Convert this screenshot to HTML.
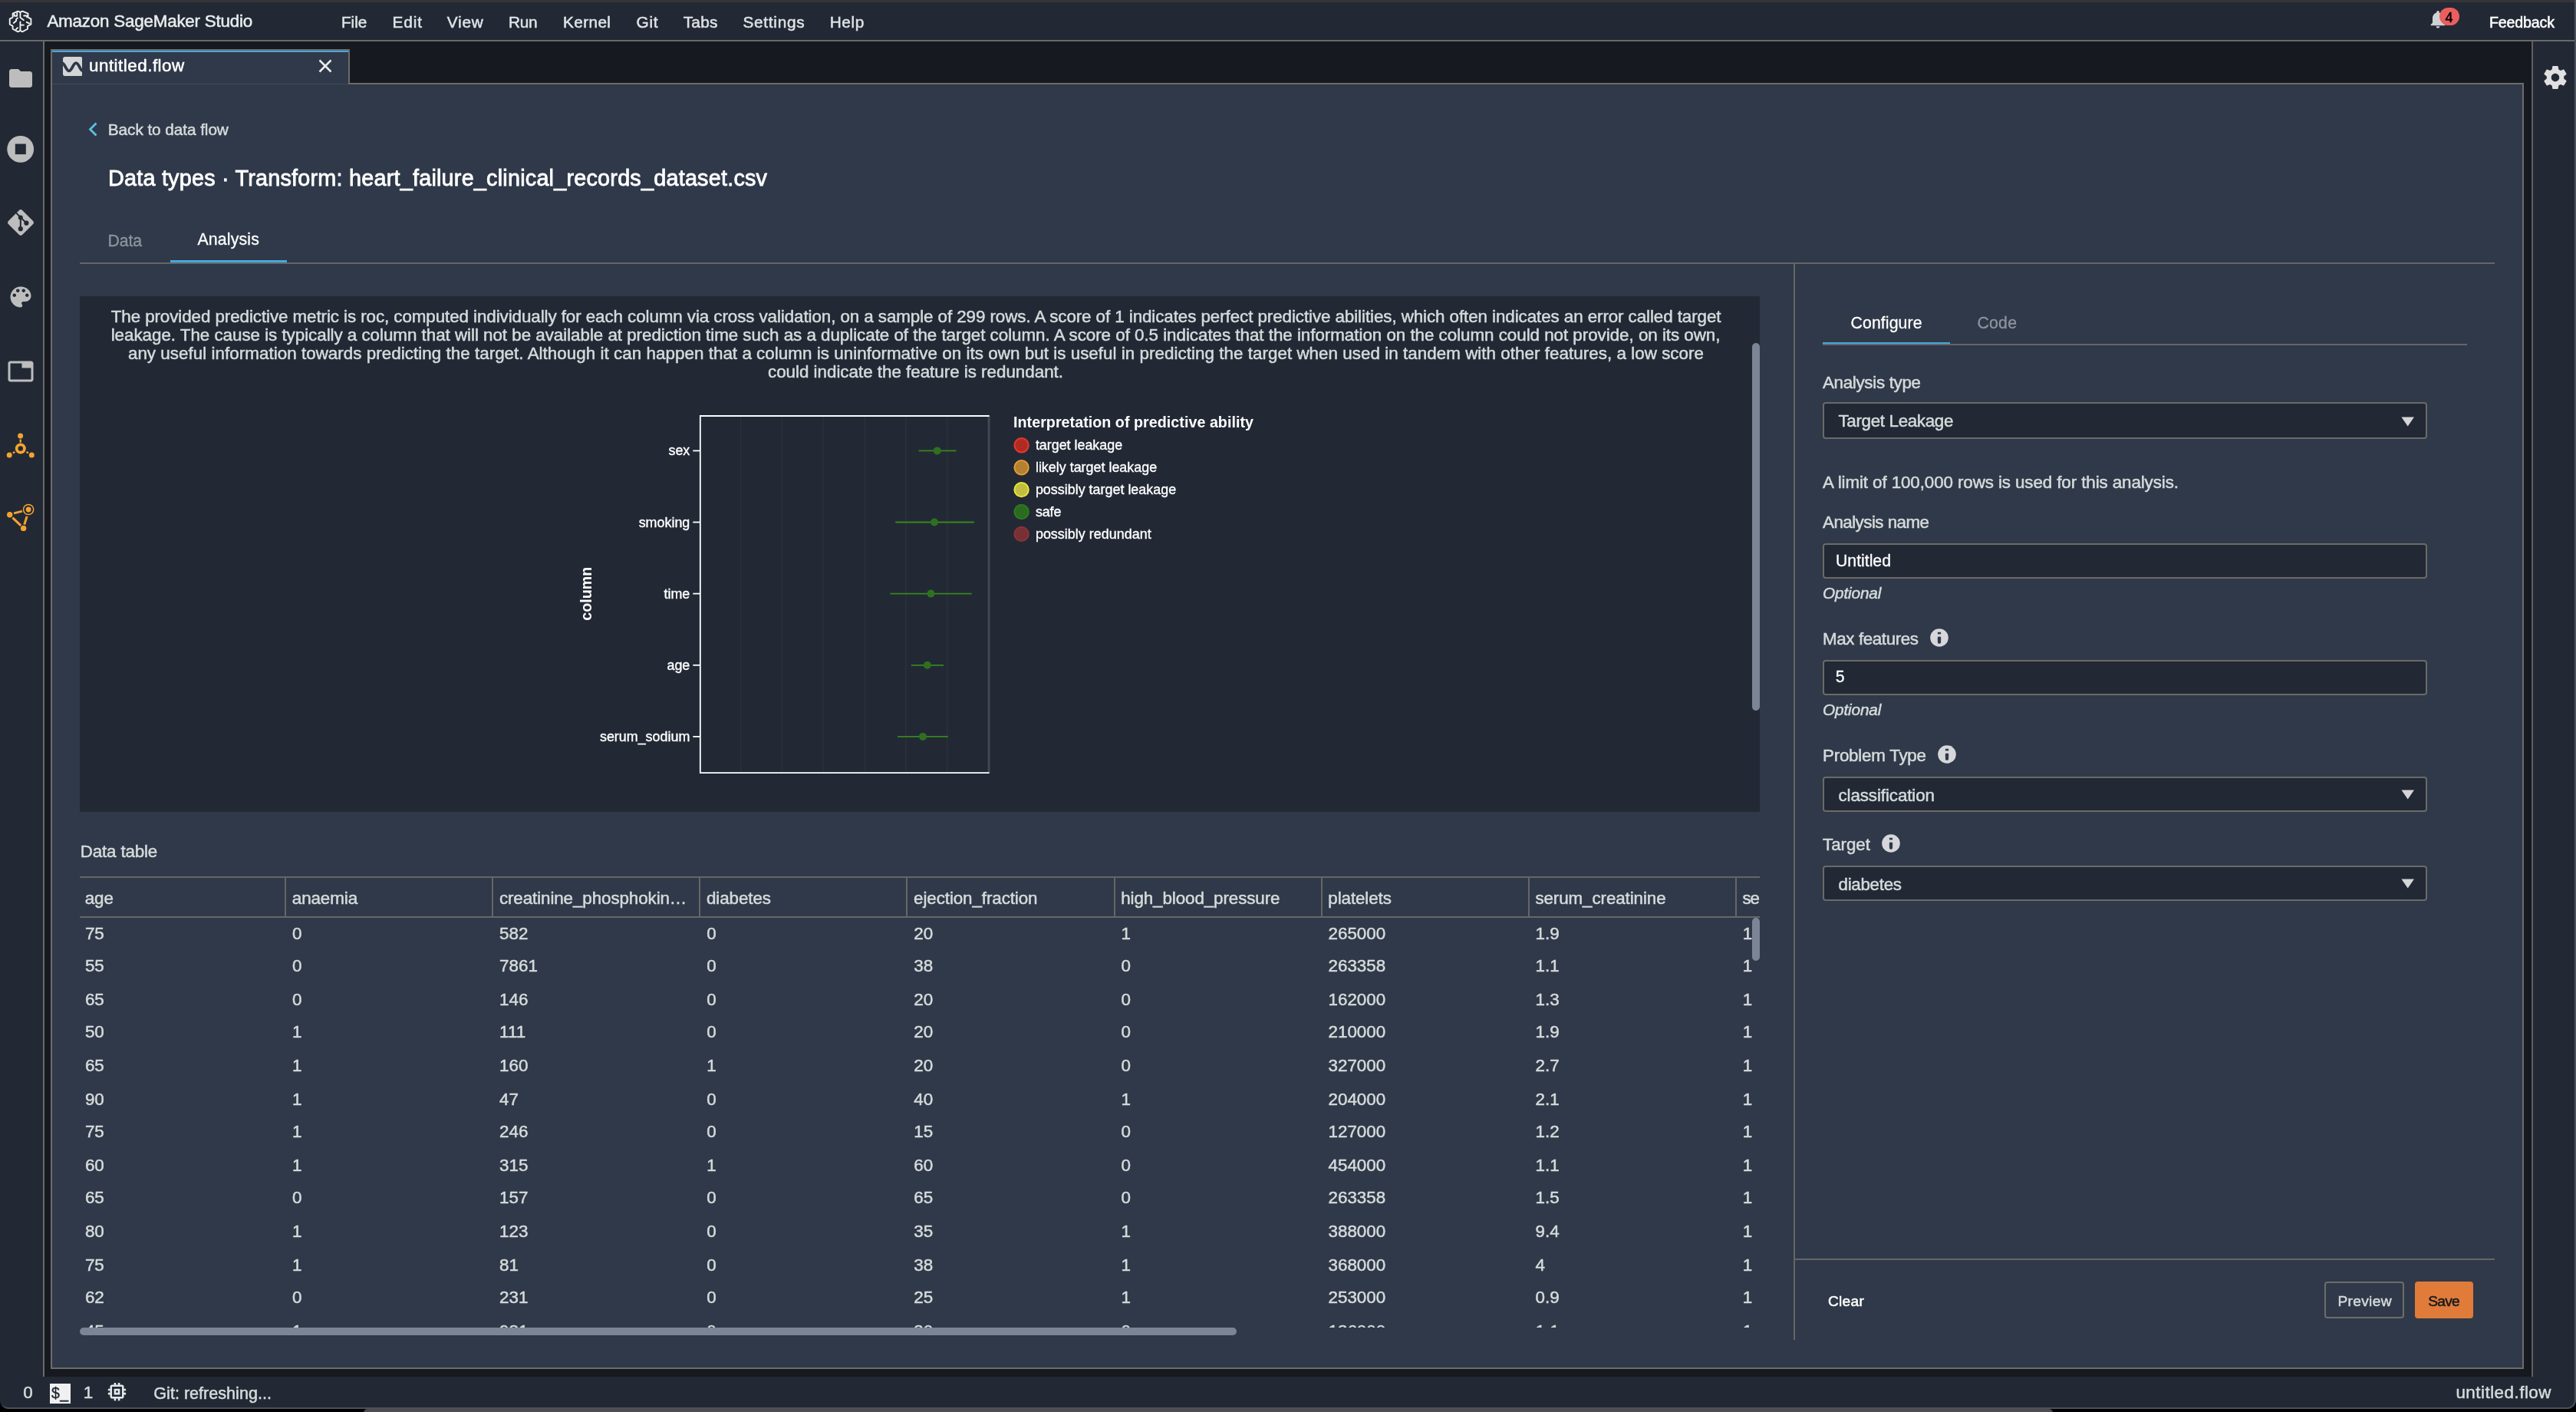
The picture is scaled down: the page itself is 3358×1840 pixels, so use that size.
<!DOCTYPE html><html lang="en"><head><meta charset="utf-8"><title>Amazon SageMaker Studio</title><style>
*{box-sizing:border-box;margin:0;padding:0}
html,body{width:3358px;height:1840px;overflow:hidden;background:#000}
body{position:relative;font-family:"Liberation Sans", sans-serif;-webkit-font-smoothing:antialiased}
.abs,.t,svg.i{position:absolute}
.t{white-space:pre;line-height:1;display:block;-webkit-text-stroke:0.5px currentColor}
#win{position:absolute;left:0;top:0;width:3358px;height:1836px;box-shadow:inset -2px -2px 0 #4a515c;background:#16191f;border-radius:0 0 12px 12px;overflow:hidden;will-change:transform}
#strip{left:0;top:0;width:3358px;height:3.500px;background:#353537}
#topbar{left:0;top:3px;width:3358px;height:51px;background:#222935;border-bottom:2px solid #6a6a68}
#lside{left:0;top:54px;width:58px;height:1740px;background:#222935;border-right:2px solid #6a6a68}
#rside{left:3300px;top:54px;width:58px;height:1740px;background:#222935;border-left:2px solid #606060}
#status{left:0;top:1794px;width:3358px;height:42px;background:#222935}
#tab{left:66px;top:63.500px;width:390px;height:46px;background:#303949;border:2px solid #6b6b69;border-bottom:none}
#tab:before{content:'';position:absolute;left:0;top:0;width:100%;height:2.500px;background:#44a8dc}
#content{left:66px;top:108px;width:3224px;height:1676px;background:#303949;border:2px solid #6c6c6a}
#tab{z-index:2}
#tabcover{left:68px;top:108px;width:386px;height:2px;background:linear-gradient(#303949 50%,#454c56 50%);z-index:3}
.hl{background:#666;height:2px}
.vl{background:#666;width:2px}
#panel{left:104px;top:386px;width:2190px;height:672px;background:#222935}
.sb{background:#7c8596;border-radius:5px}
.field{left:2376px;width:788px;height:46px;background:#222935;border:2px solid #6b6a68;border-radius:4px}
.btn{border-radius:4px;height:48px;top:1670px}
#thead .c, .row .c{position:absolute;white-space:pre;line-height:1;font-size:22.4px;color:#d5dbdb;-webkit-text-stroke:0.5px currentColor}
.sep{position:absolute;top:1144px;width:2px;height:50px;background:#666}
#tclip{left:104px;top:1142px;width:2190px;height:588px;overflow:hidden}
</style></head><body><div id="win"><div id="strip" class="abs"></div><header><div id="topbar" class="abs"></div><svg class="i" id="logo" style="left:5px;top:8px" width="45" height="42" viewBox="0 0 1513 1412" fill="none" stroke="#f4f4f4" stroke-width="62" stroke-linecap="round" stroke-linejoin="round">
<path d="M620 225 720 265 820 225 1060 320V490L1190 560V800L1040 880V1000L820 1120 720 1075 620 1120 390 1000V870L260 800V560L390 490V320z"/>
<path d="M720 265V500L870 610M720 690V1075M720 830H870M455 335V430H580V290M600 520 540 575V650L430 740M600 950 540 1010M880 420H1010V480M1000 700 1120 760"/></svg><span class="t" style="left:61.4px;top:17.1px;font-size:22.4px;color:#eaeded;letter-spacing:-0.213px;">Amazon SageMaker Studio</span><nav><span class="t" style="left:444.9px;top:18.9px;font-size:20.8px;color:#e0e3e6;letter-spacing:-0.005px;">File</span><span class="t" style="left:511.5px;top:18.9px;font-size:20.8px;color:#e0e3e6;letter-spacing:0.885px;">Edit</span><span class="t" style="left:582.8px;top:18.9px;font-size:20.8px;color:#e0e3e6;letter-spacing:0.766px;">View</span><span class="t" style="left:662.9px;top:18.9px;font-size:20.8px;color:#e0e3e6;letter-spacing:-0.228px;">Run</span><span class="t" style="left:734.1px;top:18.9px;font-size:20.8px;color:#e0e3e6;letter-spacing:0.355px;">Kernel</span><span class="t" style="left:829.6px;top:18.9px;font-size:20.8px;color:#e0e3e6;letter-spacing:0.711px;">Git</span><span class="t" style="left:890.7px;top:18.9px;font-size:20.8px;color:#e0e3e6;letter-spacing:0.254px;">Tabs</span><span class="t" style="left:968.5px;top:18.9px;font-size:20.8px;color:#e0e3e6;letter-spacing:0.706px;">Settings</span><span class="t" style="left:1081.7px;top:18.9px;font-size:20.8px;color:#e0e3e6;letter-spacing:0.640px;">Help</span></nav><svg class="i" style="left:3163.700px;top:10.800px" width="28" height="28" viewBox="0 0 24 24"><path fill="#cfd2d4" d="M12 22c1.100 0 2-.9 2-2h-4c0 1.100.89 2 2 2zm6-6v-5c0-3.070-1.640-5.640-4.500-6.320V4c0-.83-.67-1.500-1.500-1.500s-1.500.67-1.500 1.500v.68C7.630 5.360 6 7.920 6 11v5l-2 2v1h16v-1l-2-2z"/></svg><div class="abs" style="left:3180px;top:10px;width:26px;height:23px;border-radius:12px;background:#ec5e5e"></div><span class="t" style="left:3187.5px;top:14.3px;font-size:18px;color:#000000;">4</span><span class="t" style="left:3245.0px;top:20.0px;font-size:19.6px;color:#ffffff;letter-spacing:-0.152px;">Feedback</span></header><aside><div id="lside" class="abs"></div><svg class="i" style="left:9px;top:83.500px" width="36" height="36" viewBox="0 0 24 24"><path fill="#bdbdbd" d="M10 4H4c-1.100 0-1.990.9-1.990 2L2 18c0 1.100.9 2 2 2h16c1.100 0 2-.9 2-2V8c0-1.100-.9-2-2-2h-8l-2-2z"/></svg><svg class="i" style="left:8px;top:176px" width="38" height="38" viewBox="0 0 38 38"><circle cx="18.700" cy="18.300" r="17.400" fill="#bdbdbd"/><rect x="11.800" y="11.500" width="14" height="13.600" fill="#222935"/></svg><svg class="i" style="left:7px;top:270.400px" width="40" height="40" viewBox="0 0 40 40"><rect x="7.200" y="7.200" width="25.600" height="25.600" rx="3.200" transform="rotate(45 20 20)" fill="#bdbdbd"/>
<g stroke="#222935" stroke-width="2" fill="#222935"><path d="M14 7.400 19.800 13.200V28.200" fill="none"/><path d="M19.800 13.200 27.400 20.600" fill="none"/><circle cx="19.800" cy="13.400" r="2" /><circle cx="27.400" cy="20.700" r="2.100"/><circle cx="19.800" cy="28.200" r="2.100"/></g></svg><svg class="i" style="left:8.600px;top:369.400px" width="36" height="36" viewBox="0 0 24 24"><path fill="#bdbdbd" d="M12 3c-4.970 0-9 4.030-9 9s4.030 9 9 9c.83 0 1.500-.67 1.500-1.500 0-.39-.15-.74-.39-1.010-.23-.26-.38-.61-.38-.99 0-.83.67-1.500 1.500-1.500H16c2.760 0 5-2.240 5-5 0-4.420-4.030-8-9-8zm-5.500 9c-.83 0-1.500-.67-1.500-1.500S5.670 9 6.500 9 8 9.670 8 10.500 7.330 12 6.500 12zm3-4C8.670 8 8 7.330 8 6.500S8.670 5 9.500 5s1.500.67 1.500 1.500S10.330 8 9.500 8zm5 0c-.83 0-1.500-.67-1.500-1.500S13.670 5 14.500 5s1.500.67 1.500 1.500S15.330 8 14.500 8zm3 4c-.83 0-1.500-.67-1.500-1.500S16.670 9 17.500 9s1.500.67 1.500 1.500-.67 1.500-1.500 1.500z"/></svg><svg class="i" style="left:8.700px;top:465.500px" width="36" height="36" viewBox="0 0 24 24"><path fill="#bdbdbd" d="M21 3H3c-1.100 0-2 .9-2 2v14c0 1.100.9 2 2 2h18c1.100 0 2-.9 2-2V5c0-1.100-.9-2-2-2zm0 16H3V5h10v4h8v10z"/></svg><svg class="i" style="left:6px;top:560px" width="42" height="42" viewBox="0 0 42 42" fill="#f5a32f" stroke="#f5a32f"><circle cx="20.600" cy="7.900" r="3.500" stroke="none"/><circle cx="6.200" cy="33" r="3.500" stroke="none"/><circle cx="35.300" cy="33" r="3.500" stroke="none"/>
<circle cx="20.800" cy="24.500" r="5.150" fill="none" stroke-width="3.800"/><path d="M20.700 12.400v4.400M10.800 30.300l2.600-1.300M28.400 29l2.600 1.300" stroke-width="2.300" fill="none"/></svg><svg class="i" style="left:6px;top:654px" width="42" height="42" viewBox="0 0 42 42" fill="#f5a32f" stroke="#f5a32f"><circle cx="6.700" cy="16.800" r="3.700" stroke="none"/><circle cx="24.600" cy="34.400" r="3.700" stroke="none"/>
<circle cx="31.100" cy="10" r="3.400" stroke="none"/><circle cx="31.100" cy="10" r="6.600" fill="none" stroke-width="1.500"/><path d="M12.100 14.900 22.900 12.100M10.400 20.600 21.200 30.800M25.700 29.600 29.100 18.900" stroke-width="3" fill="none"/></svg></aside><aside><div id="rside" class="abs"></div><svg class="i" style="left:3312.600px;top:83.400px" width="36" height="36" viewBox="0 0 24 24"><path fill="#e0e0e0" d="M19.430 12.980c.04-.32.07-.64.07-.98s-.03-.66-.07-.98l2.110-1.650c.19-.15.24-.42.120-.64l-2-3.460c-.12-.22-.39-.3-.61-.22l-2.490 1c-.52-.4-1.080-.73-1.690-.98l-.38-2.650C14.460 2.180 14.250 2 14 2h-4c-.25 0-.46.18-.49.42l-.38 2.650c-.61.250-1.170.59-1.690.98l-2.490-1c-.23-.09-.49 0-.61.22l-2 3.460c-.13.22-.07.49.120.64l2.110 1.650c-.04.32-.07.650-.07.980s.03.660.07.980l-2.110 1.650c-.19.150-.24.420-.12.640l2 3.460c.12.220.39.300.61.220l2.490-1c.52.400 1.080.730 1.690.980l.38 2.650c.03.240.24.420.49.420h4c.25 0 .46-.18.490-.42l.38-2.650c.61-.25 1.170-.59 1.690-.98l2.490 1c.23.090.49 0 .61-.22l2-3.460c.12-.22.070-.49-.12-.64l-2.110-1.650zM12 15.500c-1.930 0-3.500-1.570-3.500-3.500s1.570-3.500 3.500-3.500 3.500 1.570 3.500 3.500-1.570 3.500-3.500 3.500z"/></svg></aside><div id="tab" class="abs"></div><div id="tabcover" class="abs"></div><svg class="i" style="left:81.700px;top:73.800px;z-index:4" width="25.500" height="25.200" viewBox="0 0 25.500 25.200"><rect width="25.500" height="25.200" rx="3" fill="#d4d5d7"/><path d="M-1.200 8.200C2.600 8.200 4.200 18.500 7.950 18.500S13.300 8.200 17.100 8.200 22.500 18.500 26.250 18.500" fill="none" stroke="#2e3848" stroke-width="3.700"/></svg><svg class="i" style="left:415.300px;top:77.200px;z-index:4" width="18" height="18" viewBox="0 0 18 18"><path d="M1.500 1.500l15 15M16.500 1.500l-15 15" stroke="#ececec" stroke-width="2.500" fill="none"/></svg><span class="t" style="left:116.0px;top:74.7px;font-size:22.4px;color:#ffffff;letter-spacing:0.496px;z-index:4;">untitled.flow</span><main><div id="content" class="abs"></div><svg class="i" style="left:115px;top:159px" width="13" height="19" viewBox="0 0 13 19"><path d="M10.500 1.500 2.500 9.500l8 8" fill="none" stroke="#5bc2de" stroke-width="2.800"/></svg><span class="t" style="left:140.8px;top:158.6px;font-size:20.8px;color:#d5dbdb;letter-spacing:-0.080px;">Back to data flow</span><h1 class="t" style="left:141.0px;top:218.0px;font-size:28.8px;color:#ffffff;letter-spacing:0.214px;-webkit-text-stroke-width:0.8px;font-weight:400;">Data types · Transform: heart_failure_clinical_records_dataset.csv</h1><span class="t" style="left:140.5px;top:303.6px;font-size:21.3px;color:#8d949e;letter-spacing:-0.167px;-webkit-text-stroke-width:0.3px;">Data</span><span class="t" style="left:257.5px;top:302.2px;font-size:21.3px;color:#ffffff;letter-spacing:0.141px;-webkit-text-stroke-width:0.3px;">Analysis</span><div class="abs hl" style="left:104px;top:342px;width:3148px"></div><div class="abs" style="left:222px;top:339px;width:152px;height:3px;background:#44a8dc"></div><section><div id="panel" class="abs"></div><p class="t" style="left:144.7px;top:402.2px;font-size:22.4px;color:#d5dbdb;letter-spacing:-0.088px;">The provided predictive metric is roc, computed individually for each column via cross validation, on a sample of 299 rows. A score of 1 indicates perfect predictive abilities, which often indicates an error called target</p><p class="t" style="left:144.7px;top:426.1px;font-size:22.4px;color:#d5dbdb;letter-spacing:-0.041px;">leakage. The cause is typically a column that will not be available at prediction time such as a duplicate of the target column. A score of 0.5 indicates that the information on the column could not provide, on its own,</p><p class="t" style="left:166.9px;top:450.1px;font-size:22.4px;color:#d5dbdb;letter-spacing:0.032px;">any useful information towards predicting the target. Although it can happen that a column is uninformative on its own but is useful in predicting the target when used in tandem with other features, a low score</p><p class="t" style="left:1001.0px;top:474.1px;font-size:22.4px;color:#d5dbdb;letter-spacing:-0.023px;">could indicate the feature is redundant.</p><div class="abs sb" style="left:2284px;top:447px;width:10px;height:479px"></div><svg class="i" style="left:104px;top:386px" width="2180" height="672" viewBox="104 386 2180 672" font-family='"Liberation Sans", sans-serif'><rect x="912.8" y="542.0" width="376.79999999999995" height="465.1" fill="none" stroke="#41464f" stroke-width="1.600"/><line x1="965.6" x2="965.6" y1="542.0" y2="1007.1" stroke="#2a303a" stroke-width="1.800"/><line x1="1019.5" x2="1019.5" y1="542.0" y2="1007.1" stroke="#2a303a" stroke-width="1.800"/><line x1="1073.3" x2="1073.3" y1="542.0" y2="1007.1" stroke="#2a303a" stroke-width="1.800"/><line x1="1127.1" x2="1127.1" y1="542.0" y2="1007.1" stroke="#2a303a" stroke-width="1.800"/><line x1="1180.9" x2="1180.9" y1="542.0" y2="1007.1" stroke="#2a303a" stroke-width="1.800"/><line x1="1234.8" x2="1234.8" y1="542.0" y2="1007.1" stroke="#2a303a" stroke-width="1.800"/><line x1="1289.0" x2="1289.0" y1="542.0" y2="1007.1" stroke="#41464f" stroke-width="3"/><path d="M1289.6 542.0H912.8V1007.1H1289.6" fill="none" stroke="#ffffff" stroke-width="1.800"/><line x1="903.3" x2="912.8" y1="587.4" y2="587.4" stroke="#ffffff" stroke-width="1.800"/><text x="899.3" y="593.4" text-anchor="end" font-size="17.900" fill="#ffffff" stroke="#ffffff" stroke-width="0.350">sex</text><line x1="1197.6" x2="1246.5" y1="587.4" y2="587.4" stroke="#37871d" stroke-width="1.800"/><circle cx="1221.7" cy="587.4" r="5" fill="#2f7020"/><line x1="903.3" x2="912.8" y1="680.5" y2="680.5" stroke="#ffffff" stroke-width="1.800"/><text x="899.3" y="686.5" text-anchor="end" font-size="17.900" fill="#ffffff" stroke="#ffffff" stroke-width="0.350">smoking</text><line x1="1167.2" x2="1269.8" y1="680.5" y2="680.5" stroke="#37871d" stroke-width="1.800"/><circle cx="1218" cy="680.5" r="5" fill="#2f7020"/><line x1="903.3" x2="912.8" y1="773.6" y2="773.6" stroke="#ffffff" stroke-width="1.800"/><text x="899.3" y="779.6" text-anchor="end" font-size="17.900" fill="#ffffff" stroke="#ffffff" stroke-width="0.350">time</text><line x1="1160.4" x2="1266.7" y1="773.6" y2="773.6" stroke="#37871d" stroke-width="1.800"/><circle cx="1213.5" cy="773.6" r="5" fill="#2f7020"/><line x1="903.3" x2="912.8" y1="866.8" y2="866.8" stroke="#ffffff" stroke-width="1.800"/><text x="899.3" y="872.8" text-anchor="end" font-size="17.900" fill="#ffffff" stroke="#ffffff" stroke-width="0.350">age</text><line x1="1187.9" x2="1230" y1="866.8" y2="866.8" stroke="#37871d" stroke-width="1.800"/><circle cx="1208.9" cy="866.8" r="5" fill="#2f7020"/><line x1="903.3" x2="912.8" y1="959.9" y2="959.9" stroke="#ffffff" stroke-width="1.800"/><text x="899.3" y="965.9" text-anchor="end" font-size="17.900" fill="#ffffff" stroke="#ffffff" stroke-width="0.350">serum_sodium</text><line x1="1170" x2="1235.9" y1="959.9" y2="959.9" stroke="#37871d" stroke-width="1.800"/><circle cx="1203" cy="959.9" r="5" fill="#2f7020"/><text transform="translate(770.800 773.700) rotate(-90)" text-anchor="middle" font-size="19.700" font-weight="700" fill="#ffffff">column</text><text x="1321" y="556.600" font-size="19.700" font-weight="700" fill="#ffffff" textLength="313" lengthAdjust="spacing">Interpretation of predictive ability</text><circle cx="1331.600" cy="580.3" r="9.200" fill="#b02a22" stroke="#e2392f" stroke-width="2"/><text x="1349.900" y="585.9" font-size="17.900" fill="#ffffff" stroke="#ffffff" stroke-width="0.350" textLength="113.2" lengthAdjust="spacing">target leakage</text><circle cx="1331.600" cy="609.2" r="9.200" fill="#b48031" stroke="#e09a36" stroke-width="2"/><text x="1349.900" y="614.8" font-size="17.900" fill="#ffffff" stroke="#ffffff" stroke-width="0.350" textLength="158.2" lengthAdjust="spacing">likely target leakage</text><circle cx="1331.600" cy="638.1" r="9.200" fill="#c2bf40" stroke="#e8e43c" stroke-width="2"/><text x="1349.900" y="643.7" font-size="17.900" fill="#ffffff" stroke="#ffffff" stroke-width="0.350" textLength="183.2" lengthAdjust="spacing">possibly target leakage</text><circle cx="1331.600" cy="667.0" r="9.200" fill="#2c6a20" stroke="#2f7a20" stroke-width="2"/><text x="1349.900" y="672.6" font-size="17.900" fill="#ffffff" stroke="#ffffff" stroke-width="0.350" textLength="33.5" lengthAdjust="spacing">safe</text><circle cx="1331.600" cy="695.9" r="9.200" fill="#793035" stroke="#8a3338" stroke-width="2"/><text x="1349.900" y="701.5" font-size="17.900" fill="#ffffff" stroke="#ffffff" stroke-width="0.350" textLength="150.8" lengthAdjust="spacing">possibly redundant</text></svg></section><section><span class="t" style="left:104.7px;top:1098.5px;font-size:22.4px;color:#d5dbdb;letter-spacing:-0.164px;">Data table</span><div id="tclip" class="abs"><div class="abs hl" style="left:0;top:0;width:2190px"></div><div class="abs hl" style="left:0;top:52px;width:2190px"></div><div id="thead"><div class="c" style="left:6.7px;top:18.0px;letter-spacing:-0.1px">age</div><div class="sep" style="left:267.1px;top:2px"></div><div class="c" style="left:276.8px;top:18.0px;letter-spacing:-0.1px">anaemia</div><div class="sep" style="left:537.2px;top:2px"></div><div class="c" style="left:546.9px;top:18.0px;letter-spacing:-0.1px">creatinine_phosphokin…</div><div class="sep" style="left:807.3px;top:2px"></div><div class="c" style="left:817.0px;top:18.0px;letter-spacing:-0.1px">diabetes</div><div class="sep" style="left:1077.4px;top:2px"></div><div class="c" style="left:1087.1px;top:18.0px;letter-spacing:-0.1px">ejection_fraction</div><div class="sep" style="left:1347.5px;top:2px"></div><div class="c" style="left:1357.2px;top:18.0px;letter-spacing:-0.1px">high_blood_pressure</div><div class="sep" style="left:1617.6px;top:2px"></div><div class="c" style="left:1627.3px;top:18.0px;letter-spacing:-0.1px">platelets</div><div class="sep" style="left:1887.7px;top:2px"></div><div class="c" style="left:1897.4px;top:18.0px;letter-spacing:-0.1px">serum_creatinine</div><div class="sep" style="left:2157.8px;top:2px"></div><div class="c" style="left:2167.5px;top:18.0px;letter-spacing:-1.2px">serum_sodium</div></div><div class="row"><div class="c" style="left:6.9px;top:63.9px">75</div><div class="c" style="left:277.0px;top:63.9px">0</div><div class="c" style="left:547.1px;top:63.9px">582</div><div class="c" style="left:817.2px;top:63.9px">0</div><div class="c" style="left:1087.3px;top:63.9px">20</div><div class="c" style="left:1357.4px;top:63.9px">1</div><div class="c" style="left:1627.5px;top:63.9px">265000</div><div class="c" style="left:1897.6px;top:63.9px">1.9</div><div class="c" style="left:2167.7px;top:63.9px">1</div></div><div class="row"><div class="c" style="left:6.9px;top:105.7px">55</div><div class="c" style="left:277.0px;top:105.7px">0</div><div class="c" style="left:547.1px;top:105.7px">7861</div><div class="c" style="left:817.2px;top:105.7px">0</div><div class="c" style="left:1087.3px;top:105.7px">38</div><div class="c" style="left:1357.4px;top:105.7px">0</div><div class="c" style="left:1627.5px;top:105.7px">263358</div><div class="c" style="left:1897.6px;top:105.7px">1.1</div><div class="c" style="left:2167.7px;top:105.7px">1</div></div><div class="row"><div class="c" style="left:6.9px;top:149.9px">65</div><div class="c" style="left:277.0px;top:149.9px">0</div><div class="c" style="left:547.1px;top:149.9px">146</div><div class="c" style="left:817.2px;top:149.9px">0</div><div class="c" style="left:1087.3px;top:149.9px">20</div><div class="c" style="left:1357.4px;top:149.9px">0</div><div class="c" style="left:1627.5px;top:149.9px">162000</div><div class="c" style="left:1897.6px;top:149.9px">1.3</div><div class="c" style="left:2167.7px;top:149.9px">1</div></div><div class="row"><div class="c" style="left:6.9px;top:191.7px">50</div><div class="c" style="left:277.0px;top:191.7px">1</div><div class="c" style="left:547.1px;top:191.7px">111</div><div class="c" style="left:817.2px;top:191.7px">0</div><div class="c" style="left:1087.3px;top:191.7px">20</div><div class="c" style="left:1357.4px;top:191.7px">0</div><div class="c" style="left:1627.5px;top:191.7px">210000</div><div class="c" style="left:1897.6px;top:191.7px">1.9</div><div class="c" style="left:2167.7px;top:191.7px">1</div></div><div class="row"><div class="c" style="left:6.9px;top:235.9px">65</div><div class="c" style="left:277.0px;top:235.9px">1</div><div class="c" style="left:547.1px;top:235.9px">160</div><div class="c" style="left:817.2px;top:235.9px">1</div><div class="c" style="left:1087.3px;top:235.9px">20</div><div class="c" style="left:1357.4px;top:235.9px">0</div><div class="c" style="left:1627.5px;top:235.9px">327000</div><div class="c" style="left:1897.6px;top:235.9px">2.7</div><div class="c" style="left:2167.7px;top:235.9px">1</div></div><div class="row"><div class="c" style="left:6.9px;top:279.6px">90</div><div class="c" style="left:277.0px;top:279.6px">1</div><div class="c" style="left:547.1px;top:279.6px">47</div><div class="c" style="left:817.2px;top:279.6px">0</div><div class="c" style="left:1087.3px;top:279.6px">40</div><div class="c" style="left:1357.4px;top:279.6px">1</div><div class="c" style="left:1627.5px;top:279.6px">204000</div><div class="c" style="left:1897.6px;top:279.6px">2.1</div><div class="c" style="left:2167.7px;top:279.6px">1</div></div><div class="row"><div class="c" style="left:6.9px;top:321.9px">75</div><div class="c" style="left:277.0px;top:321.9px">1</div><div class="c" style="left:547.1px;top:321.9px">246</div><div class="c" style="left:817.2px;top:321.9px">0</div><div class="c" style="left:1087.3px;top:321.9px">15</div><div class="c" style="left:1357.4px;top:321.9px">0</div><div class="c" style="left:1627.5px;top:321.9px">127000</div><div class="c" style="left:1897.6px;top:321.9px">1.2</div><div class="c" style="left:2167.7px;top:321.9px">1</div></div><div class="row"><div class="c" style="left:6.9px;top:365.6px">60</div><div class="c" style="left:277.0px;top:365.6px">1</div><div class="c" style="left:547.1px;top:365.6px">315</div><div class="c" style="left:817.2px;top:365.6px">1</div><div class="c" style="left:1087.3px;top:365.6px">60</div><div class="c" style="left:1357.4px;top:365.6px">0</div><div class="c" style="left:1627.5px;top:365.6px">454000</div><div class="c" style="left:1897.6px;top:365.6px">1.1</div><div class="c" style="left:2167.7px;top:365.6px">1</div></div><div class="row"><div class="c" style="left:6.9px;top:407.9px">65</div><div class="c" style="left:277.0px;top:407.9px">0</div><div class="c" style="left:547.1px;top:407.9px">157</div><div class="c" style="left:817.2px;top:407.9px">0</div><div class="c" style="left:1087.3px;top:407.9px">65</div><div class="c" style="left:1357.4px;top:407.9px">0</div><div class="c" style="left:1627.5px;top:407.9px">263358</div><div class="c" style="left:1897.6px;top:407.9px">1.5</div><div class="c" style="left:2167.7px;top:407.9px">1</div></div><div class="row"><div class="c" style="left:6.9px;top:451.6px">80</div><div class="c" style="left:277.0px;top:451.6px">1</div><div class="c" style="left:547.1px;top:451.6px">123</div><div class="c" style="left:817.2px;top:451.6px">0</div><div class="c" style="left:1087.3px;top:451.6px">35</div><div class="c" style="left:1357.4px;top:451.6px">1</div><div class="c" style="left:1627.5px;top:451.6px">388000</div><div class="c" style="left:1897.6px;top:451.6px">9.4</div><div class="c" style="left:2167.7px;top:451.6px">1</div></div><div class="row"><div class="c" style="left:6.9px;top:495.7px">75</div><div class="c" style="left:277.0px;top:495.7px">1</div><div class="c" style="left:547.1px;top:495.7px">81</div><div class="c" style="left:817.2px;top:495.7px">0</div><div class="c" style="left:1087.3px;top:495.7px">38</div><div class="c" style="left:1357.4px;top:495.7px">1</div><div class="c" style="left:1627.5px;top:495.7px">368000</div><div class="c" style="left:1897.6px;top:495.7px">4</div><div class="c" style="left:2167.7px;top:495.7px">1</div></div><div class="row"><div class="c" style="left:6.9px;top:537.6px">62</div><div class="c" style="left:277.0px;top:537.6px">0</div><div class="c" style="left:547.1px;top:537.6px">231</div><div class="c" style="left:817.2px;top:537.6px">0</div><div class="c" style="left:1087.3px;top:537.6px">25</div><div class="c" style="left:1357.4px;top:537.6px">1</div><div class="c" style="left:1627.5px;top:537.6px">253000</div><div class="c" style="left:1897.6px;top:537.6px">0.9</div><div class="c" style="left:2167.7px;top:537.6px">1</div></div><div class="row"><div class="c" style="left:6.9px;top:581.7px">45</div><div class="c" style="left:277.0px;top:581.7px">1</div><div class="c" style="left:547.1px;top:581.7px">981</div><div class="c" style="left:817.2px;top:581.7px">0</div><div class="c" style="left:1087.3px;top:581.7px">30</div><div class="c" style="left:1357.4px;top:581.7px">0</div><div class="c" style="left:1627.5px;top:581.7px">136000</div><div class="c" style="left:1897.6px;top:581.7px">1.1</div><div class="c" style="left:2167.7px;top:581.7px">1</div></div></div><div class="abs sb" style="left:2284px;top:1196px;width:10px;height:56px"></div><div class="abs sb" style="left:104px;top:1729.500px;width:1508px;height:10.500px"></div></section><aside><div class="abs vl" style="left:2338px;top:344px;height:1402px"></div><div class="abs hl" style="left:2340px;top:1640px;width:912px"></div><span class="t" style="left:2412.5px;top:410.6px;font-size:21.3px;color:#ffffff;letter-spacing:0.082px;-webkit-text-stroke-width:0.3px;">Configure</span><span class="t" style="left:2577.5px;top:410.6px;font-size:21.3px;color:#8d949e;letter-spacing:0.193px;-webkit-text-stroke-width:0.3px;">Code</span><div class="abs hl" style="left:2376px;top:448px;width:840px"></div><div class="abs" style="left:2376px;top:446px;width:166px;height:2.200px;background:#44a8dc"></div><span class="t" style="left:2376.0px;top:487.5px;font-size:22.4px;color:#d5dbdb;letter-spacing:-0.327px;">Analysis type</span><div class="abs field" style="top:524px;height:48px"></div><span class="t" style="left:2396.5px;top:538.1px;font-size:22.4px;color:#d5dbdb;letter-spacing:-0.344px;">Target Leakage</span><svg class="i" style="left:3130px;top:542.6px" width="18" height="13" viewBox="0 0 18 13"><path d="M0.500 0.500h16.500L8.700 12.500z" fill="#d5d6d8"/></svg><span class="t" style="left:2376.0px;top:618.2px;font-size:22.4px;color:#d5dbdb;letter-spacing:-0.106px;">A limit of 100,000 rows is used for this analysis.</span><span class="t" style="left:2376.0px;top:669.9px;font-size:22.4px;color:#d5dbdb;letter-spacing:-0.551px;">Analysis name</span><div class="abs field" style="top:708px"></div><span class="t" style="left:2393.0px;top:721.2px;font-size:21.3px;color:#ffffff;letter-spacing:-0.031px;-webkit-text-stroke-width:0.3px;">Untitled</span><span class="t" style="left:2376.0px;top:762.8px;font-size:20.8px;color:#d5dbdb;letter-spacing:-0.153px;font-style:italic;">Optional</span><span class="t" style="left:2376.0px;top:821.5px;font-size:22.4px;color:#d5dbdb;letter-spacing:-0.403px;">Max features</span><svg class="i" style="left:2515px;top:818px" width="26" height="26" viewBox="0 0 26 26"><circle cx="13" cy="13" r="11.800" fill="#d6d7db"/><rect x="10.900" y="5.750" width="4.200" height="2.600" fill="#303949"/><rect x="10.900" y="11.800" width="4.200" height="8.900" rx="1.600" fill="#303949"/><rect x="10.900" y="11.800" width="4.200" height="4" fill="#303949"/></svg><div class="abs field" style="top:860px"></div><span class="t" style="left:2392.8px;top:871.5px;font-size:21.3px;color:#ffffff;-webkit-text-stroke-width:0.3px;">5</span><span class="t" style="left:2376.0px;top:914.8px;font-size:20.8px;color:#d5dbdb;letter-spacing:-0.153px;font-style:italic;">Optional</span><span class="t" style="left:2376.0px;top:973.5px;font-size:22.4px;color:#d5dbdb;letter-spacing:-0.249px;">Problem Type</span><svg class="i" style="left:2524.8px;top:970.2px" width="26" height="26" viewBox="0 0 26 26"><circle cx="13" cy="13" r="11.800" fill="#d6d7db"/><rect x="10.900" y="5.750" width="4.200" height="2.600" fill="#303949"/><rect x="10.900" y="11.800" width="4.200" height="8.900" rx="1.600" fill="#303949"/><rect x="10.900" y="11.800" width="4.200" height="4" fill="#303949"/></svg><div class="abs field" style="top:1012px"></div><span class="t" style="left:2396.5px;top:1025.5px;font-size:22.4px;color:#d5dbdb;letter-spacing:-0.111px;">classification</span><svg class="i" style="left:3130px;top:1029px" width="18" height="13" viewBox="0 0 18 13"><path d="M0.500 0.500h16.500L8.700 12.500z" fill="#d5d6d8"/></svg><span class="t" style="left:2376.0px;top:1089.7px;font-size:22.4px;color:#d5dbdb;letter-spacing:-0.047px;">Target</span><svg class="i" style="left:2451.7px;top:1086px" width="26" height="26" viewBox="0 0 26 26"><circle cx="13" cy="13" r="11.800" fill="#d6d7db"/><rect x="10.900" y="5.750" width="4.200" height="2.600" fill="#303949"/><rect x="10.900" y="11.800" width="4.200" height="8.900" rx="1.600" fill="#303949"/><rect x="10.900" y="11.800" width="4.200" height="4" fill="#303949"/></svg><div class="abs field" style="top:1128px"></div><span class="t" style="left:2396.5px;top:1141.8px;font-size:22.4px;color:#d5dbdb;letter-spacing:-0.308px;">diabetes</span><svg class="i" style="left:3130px;top:1145px" width="18" height="13" viewBox="0 0 18 13"><path d="M0.500 0.500h16.500L8.700 12.500z" fill="#d5d6d8"/></svg><span class="t" style="left:2383.0px;top:1685.7px;font-size:19.2px;color:#ffffff;letter-spacing:0.235px;">Clear</span><div class="abs btn" style="left:3030px;width:104px;border:2px solid #6d6c6a"></div><span class="t" style="left:3047.4px;top:1685.7px;font-size:19.2px;color:#d5dbdb;letter-spacing:0.308px;">Preview</span><div class="abs btn" style="left:3147.500px;width:76.500px;background:#e07b39"></div><span class="t" style="left:3165.3px;top:1685.7px;font-size:19.2px;color:#16191f;letter-spacing:-0.811px;">Save</span></aside></main><footer><div id="status" class="abs"></div><span class="t" style="left:30.3px;top:1804.0px;font-size:22.4px;color:#d5dbdb;">0</span><div class="abs" style="left:64.500px;top:1802.500px;width:27px;height:26.500px;background:#f0f0f0"></div><span class="t" style="left:67px;top:1806px;font-size:19.500px;color:#1c2230;letter-spacing:0.500px;-webkit-text-stroke:0.300px">$_</span><span class="t" style="left:108.7px;top:1804.0px;font-size:22.4px;color:#d5dbdb;">1</span><svg class="i" style="left:136.700px;top:1798.400px" width="31" height="31" viewBox="0 0 24 24"><path fill="#e4e7e9" d="M15 9H9v6h6V9zm-2 4h-2v-2h2v2zm8-2V9h-2V7c0-1.100-.9-2-2-2h-2V3h-2v2h-2V3H9v2H7c-1.100 0-2 .9-2 2v2H3v2h2v2H3v2h2v2c0 1.100.9 2 2 2h2v2h2v-2h2v2h2v-2h2c1.100 0 2-.9 2-2v-2h2v-2h-2v-2h2zm-4 6H7V7h10v10z"/></svg><span class="t" style="left:200.3px;top:1804.7px;font-size:21.6px;color:#d5dbdb;">Git: refreshing...</span><span class="t" style="left:3201.4px;top:1804.0px;font-size:22.4px;color:#d5dbdb;letter-spacing:0.487px;">untitled.flow</span></footer><div class="abs" style="left:0;top:0;width:3358px;height:1836px;border-radius:0 0 11px 11px;border-right:2px solid #4a515c;border-bottom:2px solid #4a515c;pointer-events:none"></div></div><div class="abs" style="left:474px;top:1835.500px;width:2202px;height:10px;border-radius:9px;background:#4d4c4e"></div></body></html>
